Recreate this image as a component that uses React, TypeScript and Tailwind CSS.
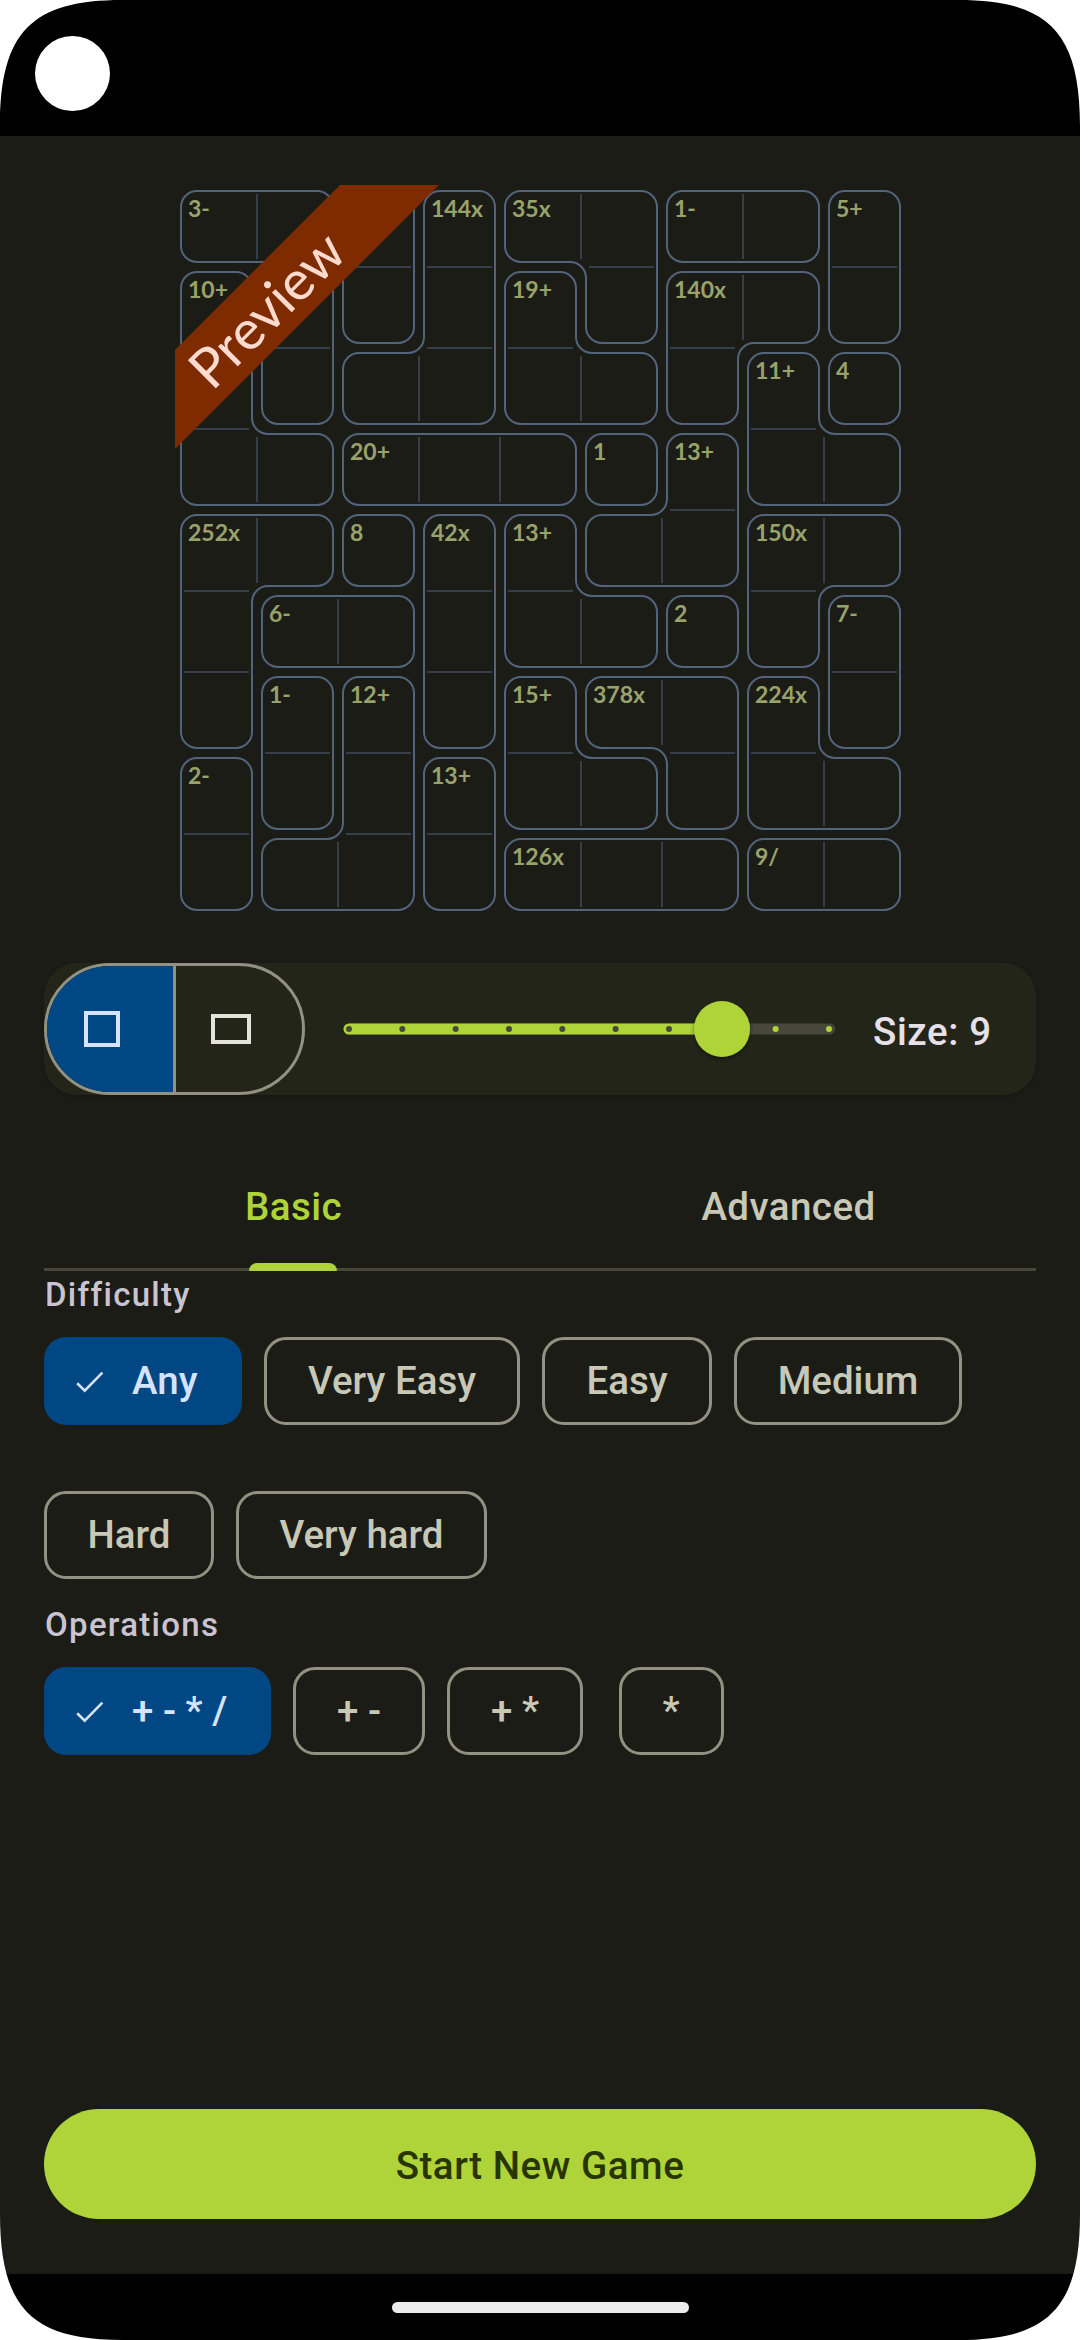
import React from "react";

type Cell = [number, number];
type Cage = { label: string; cells: Cell[] };

const CELL = 81;
const INSET = 5;
const RADIUS = 16;

// Cells are [row, column]; the first one carries the label.
const cages: Cage[] = [
  { label: "3-", cells: [[0, 0], [0, 1]] },
  { label: "", cells: [[0, 2], [1, 2]] },
  { label: "144x", cells: [[0, 3], [1, 3], [2, 3], [2, 2]] },
  { label: "35x", cells: [[0, 4], [0, 5], [1, 5]] },
  { label: "1-", cells: [[0, 6], [0, 7]] },
  { label: "5+", cells: [[0, 8], [1, 8]] },
  { label: "10+", cells: [[1, 0], [2, 0], [3, 0], [3, 1]] },
  { label: "", cells: [[1, 1], [2, 1]] },
  { label: "19+", cells: [[1, 4], [2, 4], [2, 5]] },
  { label: "140x", cells: [[1, 6], [1, 7], [2, 6]] },
  { label: "11+", cells: [[2, 7], [3, 7], [3, 8]] },
  { label: "4", cells: [[2, 8]] },
  { label: "20+", cells: [[3, 2], [3, 3], [3, 4]] },
  { label: "1", cells: [[3, 5]] },
  { label: "13+", cells: [[3, 6], [4, 6], [4, 5]] },
  { label: "252x", cells: [[4, 0], [4, 1], [5, 0], [6, 0]] },
  { label: "8", cells: [[4, 2]] },
  { label: "42x", cells: [[4, 3], [5, 3], [6, 3]] },
  { label: "13+", cells: [[4, 4], [5, 4], [5, 5]] },
  { label: "150x", cells: [[4, 7], [4, 8], [5, 7]] },
  { label: "6-", cells: [[5, 1], [5, 2]] },
  { label: "2", cells: [[5, 6]] },
  { label: "7-", cells: [[5, 8], [6, 8]] },
  { label: "1-", cells: [[6, 1], [7, 1]] },
  { label: "12+", cells: [[6, 2], [7, 2], [8, 2], [8, 1]] },
  { label: "15+", cells: [[6, 4], [7, 4], [7, 5]] },
  { label: "378x", cells: [[6, 5], [6, 6], [7, 6]] },
  { label: "224x", cells: [[6, 7], [7, 7], [7, 8]] },
  { label: "2-", cells: [[7, 0], [8, 0]] },
  { label: "13+", cells: [[7, 3], [8, 3]] },
  { label: "126x", cells: [[8, 4], [8, 5], [8, 6]] },
  { label: "9/", cells: [[8, 7], [8, 8]] },
];

/** Walks the cage boundary clockwise and returns a rounded, inset outline. */
function cageOutline(cells: Cell[]): string {
  const has = (r: number, c: number) => cells.some(([a, b]) => a === r && b === c);
  const edges = new Map<string, [number, number]>();
  for (const [r, c] of cells) {
    if (!has(r - 1, c)) edges.set(`${c},${r}`, [c + 1, r]);
    if (!has(r, c + 1)) edges.set(`${c + 1},${r}`, [c + 1, r + 1]);
    if (!has(r + 1, c)) edges.set(`${c + 1},${r + 1}`, [c, r + 1]);
    if (!has(r, c - 1)) edges.set(`${c},${r + 1}`, [c, r]);
  }
  const start = [...edges.keys()][0];
  const loop: [number, number][] = [];
  let key = start;
  do {
    loop.push(key.split(",").map(Number) as [number, number]);
    key = edges.get(key)!.join(",");
  } while (key !== start);

  const n = loop.length;
  let d = "";
  loop.forEach(([x, y], i) => {
    const [px, py] = loop[(i + n - 1) % n];
    const [nx, ny] = loop[(i + 1) % n];
    const ix = x - px;
    const iy = y - py;
    const ox = nx - x;
    const oy = ny - y;
    const turn = ix * oy - iy * ox;
    if (turn === 0) return;
    const cx = x * CELL + (-iy - oy) * INSET;
    const cy = y * CELL + (ix + ox) * INSET;
    d += `${d ? "L" : "M"}${cx - ix * RADIUS} ${cy - iy * RADIUS}`;
    d += `A${RADIUS} ${RADIUS} 0 0 ${turn > 0 ? 1 : 0} ${cx + ox * RADIUS} ${cy + oy * RADIUS}`;
  });
  return d + "Z";
}

/** Short separators between neighbouring cells of the same cage. */
function cageDividers(cells: Cell[]): string {
  const has = (r: number, c: number) => cells.some(([a, b]) => a === r && b === c);
  let d = "";
  for (const [r, c] of cells) {
    const x = c * CELL;
    const y = r * CELL;
    if (has(r, c + 1)) d += `M${x + CELL} ${y + 8}v65`;
    if (has(r + 1, c)) d += `M${x + 8} ${y + CELL}h65`;
  }
  return d;
}

function Board() {
  return (
    <div className="mx-auto mt-[49px] h-[731px] w-[730px]">
      <svg className="block" width="730" height="731" viewBox="-1 -1 730 731" fill="none">
        {cages.map((cage, i) => (
          <g key={i}>
            <path d={cageDividers(cage.cells)} stroke="#363f49" strokeWidth="2" />
            <path d={cageOutline(cage.cells)} stroke="#52637b" strokeWidth="2" />
            <text
              x={cage.cells[0][1] * CELL + 12}
              y={cage.cells[0][0] * CELL + 31}
              fill="#98a36b"
              fontFamily="Lato, sans-serif"
              fontWeight="700"
              fontSize="23"
            >
              {cage.label}
            </text>
          </g>
        ))}
        <path d="M-1 164L164 -1H263L-1 263Z" fill="#7f2b00" />
        <text
          transform="translate(90 123) rotate(-45)"
          y="20.5"
          textAnchor="middle"
          fill="#ffdbcf"
          fontFamily="Lato, sans-serif"
          fontSize="55"
        >
          Preview
        </text>
      </svg>
    </div>
  );
}

function SizeBar() {
  return (
    <div className="mt-[47px] flex h-[132px] items-center rounded-[33px] bg-[#242519] shadow-[0_2px_4px_rgba(0,0,0,0.2)]">
      <div className="flex h-[132px] w-[261px] overflow-hidden rounded-full border-[3px] border-[#929282]">
        <div className="flex w-[129px] border-r-[3px] border-[#929282] bg-[#004784]">
          <div className="mt-[45px] ml-[37px] size-[36px] border-[4px] border-[#d6e3ff]" />
        </div>
        <div className="flex flex-1">
          <div className="mt-[48px] ml-[35px] h-[30px] w-[40px] border-[4px] border-[#e4e3db]" />
        </div>
      </div>
      <svg className="ml-[35px] block" width="500" height="80" viewBox="340 989 500 80">
        <defs>
          <filter id="thumb" x="-30%" y="-30%" width="160%" height="160%">
            <feDropShadow dx="0" dy="2" stdDeviation="2" floodColor="#000" floodOpacity="0.5" />
          </filter>
        </defs>
        <rect x="343.5" y="1023.5" width="491.5" height="11" rx="5.5" fill="#47483b" />
        <rect x="343.5" y="1023.5" width="379" height="11" rx="5.5" fill="#aed439" />
        {Array.from({ length: 10 }, (_, i) => (
          <circle key={i} cx={349 + i * 53.33} cy="1029" r="3" fill={i < 7 ? "#47483b" : "#aed439"} />
        ))}
        <circle cx="722" cy="1029" r="28" fill="#aed439" filter="url(#thumb)" />
      </svg>
      <span className="mt-[4px] ml-[33px] text-[38.5px] leading-[55px] font-medium tracking-[0.6px] whitespace-nowrap text-[#e6e0e9]">
        Size: 9
      </span>
    </div>
  );
}

function Tabs() {
  return (
    <div className="mt-[44px] flex h-[132px] border-b-[3px] border-[#47483b] text-[38.5px] leading-[55px] font-medium tracking-[0.45px]">
      <div className="relative flex flex-1 justify-center pt-[40px] pl-[2px] text-[#aed439]">
        Basic
        <div className="absolute -bottom-[3px] left-1/2 h-[8px] w-[88px] -translate-x-1/2 rounded-t-[8px] bg-[#aed439]" />
      </div>
      <div className="flex flex-1 justify-center pt-[40px] text-[#c8c8b7]">Advanced</div>
    </div>
  );
}

function Chip({ label, width, selected }: { label: string; width: string; selected?: boolean }) {
  return (
    <div
      className={`flex h-[88px] items-center rounded-[22px] pb-[2px] text-[38.5px] leading-[55px] font-medium whitespace-nowrap ${width} ${
        selected
          ? "bg-[#004784] pl-[32px] text-[#d6e3ff]"
          : "justify-center border-[3px] border-[#929282] text-[#c8c8b7]"
      }`}
    >
      {selected && (
        <svg className="mt-[4px] mr-[28px] block" width="28" height="22" viewBox="0 0 28 22" fill="none">
          <path d="M1.2 12.2L8.7 19.6L26.4 1.6" stroke="#d6e3ff" strokeWidth="2.6" />
        </svg>
      )}
      {label}
    </div>
  );
}

function SectionLabel({ children }: { children: React.ReactNode }) {
  return (
    <div className="pl-px text-[33px] leading-[44px] font-medium tracking-[1.3px] text-[#cac4d0]">{children}</div>
  );
}

function Corner({ className }: { className: string }) {
  return (
    <svg className={`absolute block ${className}`} width="126" height="126" viewBox="0 0 126 126">
      <path d="M0 0H122C32 0 0 32 0 126Z" fill="#fff" />
    </svg>
  );
}

export default function App() {
  return (
    <div
      className="relative flex h-[2340px] w-[1080px] flex-col overflow-hidden bg-[#1c1c17]"
      style={{ fontFamily: "Roboto, sans-serif" }}
    >
      <header className="h-[136px] shrink-0 bg-black pt-[36px] pl-[35px]">
        <div className="size-[75px] rounded-full bg-white" />
      </header>

      <main className="flex flex-1 flex-col px-[44px]">
        <Board />
        <SizeBar />
        <Tabs />
        <div className="mt-[2px]">
          <SectionLabel>Difficulty</SectionLabel>
          <div className="mt-[20px] flex flex-wrap gap-x-[22px] gap-y-[66px]">
            <Chip label="Any" width="w-[198px]" selected />
            <Chip label="Very Easy" width="w-[256px]" />
            <Chip label="Easy" width="w-[170px]" />
            <Chip label="Medium" width="w-[228px]" />
            <Chip label="Hard" width="w-[170px]" />
            <Chip label="Very hard" width="w-[251px]" />
          </div>
        </div>
        <div className="mt-[24px]">
          <SectionLabel>Operations</SectionLabel>
          <div className="mt-[20px] flex gap-[22px]">
            <Chip label="+ - * /" width="w-[227px]" selected />
            <Chip label="+ -" width="w-[132px]" />
            <Chip label="+ *" width="w-[136px]" />
            <div className="flex w-[132px] justify-center">
              <Chip label="*" width="w-[105px]" />
            </div>
          </div>
        </div>
        <button className="mt-auto mb-[55px] h-[110px] rounded-full bg-[#aed439] pt-[4px] text-[38.5px] font-medium tracking-[0.55px] text-[#293500]">
          Start New Game
        </button>
      </main>

      <footer className="flex h-[66px] shrink-0 items-center justify-center bg-black">
        <div className="h-[11px] w-[297px] rounded-full bg-[#ebebeb]" />
      </footer>

      <Corner className="top-0 left-0" />
      <Corner className="top-0 right-0 -scale-x-100" />
      <Corner className="bottom-0 left-0 -scale-y-100" />
      <Corner className="right-0 bottom-0 -scale-100" />
    </div>
  );
}
